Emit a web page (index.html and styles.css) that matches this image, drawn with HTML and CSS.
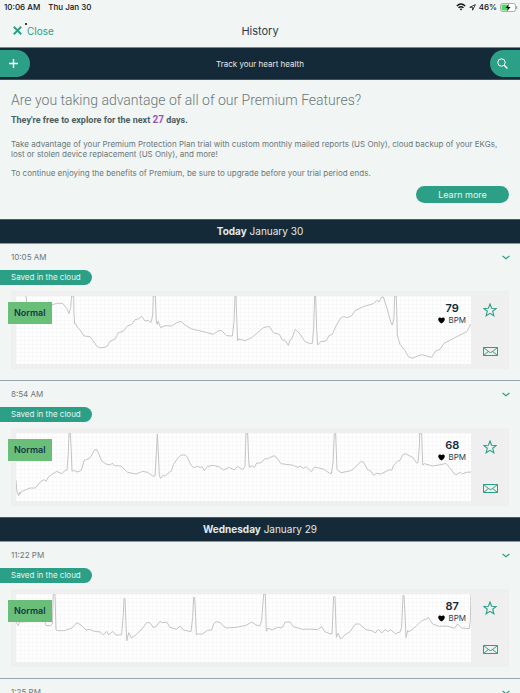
FILE: index.html
```
<!DOCTYPE html>
<html lang="en">
<head>
    <meta charset="UTF-8">
    <meta name="viewport" content="width=device-width, initial-scale=1.0">
    <title>History</title>
    <link rel="stylesheet" href="styles.css">
</head>
<body>

<!-- Shared icons -->
<svg class="sprite" aria-hidden="true">
    <symbol id="chevron" viewBox="0 0 8 5"><path d="M.6 1 L4 3.8 L7.4 1" fill="none" stroke="currentColor" stroke-width="1.2"/></symbol>
    <symbol id="star" viewBox="0 0 14 14"><path d="M7 1 L8.6 5.2 L13.2 5.4 L9.7 8.3 L10.9 12.8 L7 10.3 L3.1 12.8 L4.3 8.3 L.8 5.4 L5.4 5.2 Z" fill="none" stroke="currentColor" stroke-width="1.1"/></symbol>
    <symbol id="mail" viewBox="0 0 15 9"><path d="M.5 .5 H14.5 V8.5 H.5 Z M.5 .5 L5.8 4.8 Q7.5 6.2 9.2 4.8 L14.5 .5 M.5 8.5 L5.4 4.5 M14.5 8.5 L9.6 4.5" fill="none" stroke="currentColor" stroke-width="1"/></symbol>
    <symbol id="heart" viewBox="0 0 7 7"><path d="M3.5 6.6 C2 5.5 .2 4 .2 2.2 C.2 .2 2.7 -.1 3.5 1.2 C4.3 -.1 6.8 .2 6.8 2.2 C6.8 4 5 5.5 3.5 6.6 Z" fill="#000"/></symbol>
</svg>

<div class="app">
    <div class="status-bar">
        <span>10:06 AM</span>
        <span>Thu Jan 30</span>
        <span class="status-right">
            <svg width="10" height="8" viewBox="0 0 10 8" fill="none" stroke="#111" stroke-width="1.4">
                <path d="M.8 2.9 Q5 -.9 9.2 2.9 M2.5 4.8 Q5 2.6 7.5 4.8"/>
                <path d="M3.7 6 Q5 4.9 6.3 6 L5 7.5 Z" fill="#111" stroke="none"/>
            </svg>
            <svg width="7" height="7" viewBox="0 0 7 7"><path d="M6.4 .6 L.8 3.3 H3.6 V6.2 Z" fill="none" stroke="#111" stroke-width=".8"/></svg>
            <span>46%</span>
            <svg class="battery" width="18" height="9" viewBox="0 0 18 9">
                <rect x=".5" y=".5" width="15" height="8" rx="2" fill="#fff" stroke="#999" stroke-width=".8"/>
                <rect x="1.5" y="1.5" width="6.5" height="6" rx="1" fill="#4cd964"/>
                <path d="M8.8 1 L5.6 5 H7.8 L7.2 8 L10.6 4 H8.3 Z" fill="#000"/>
                <path d="M16.7 3 V6" stroke="#999" stroke-width="1"/>
            </svg>
        </span>
    </div>

    <header class="nav">
        <button type="button" class="close">
            <svg width="9" height="9" viewBox="0 0 9 9"><path d="M.8 .8 L8.2 8.2 M8.2 .8 L.8 8.2" stroke="currentColor" stroke-width="2"/></svg>
            <span>Close</span>
        </button>
        <h1>History</h1>
    </header>

    <div class="toolbar">
        <button type="button" class="tool tool-add" aria-label="Add">
            <svg width="9" height="9" viewBox="0 0 9 9"><path d="M4.5 0 V9 M0 4.5 H9" stroke="#fff" stroke-width="1.4"/></svg>
        </button>
        <span>Track your heart health</span>
        <button type="button" class="tool tool-search" aria-label="Search">
            <svg width="11" height="11" viewBox="0 0 11 11" fill="none" stroke="#fff" stroke-width="1"><circle cx="4.5" cy="4.5" r="3.7"/><path d="M7.2 7.2 L10.4 10.4" stroke-width="1.4"/></svg>
        </button>
    </div>

    <main>
        <section class="promo">
            <h2>Are you taking advantage of all of our Premium Features?</h2>
            <p class="trial">They're free to explore for the next <span class="days">27</span> days.</p>
            <p>Take advantage of your Premium Protection Plan trial with custom monthly mailed reports (US Only), cloud backup of your EKGs, lost or stolen device replacement (US Only), and more!</p>
            <p>To continue enjoying the benefits of Premium, be sure to upgrade before your trial period ends.</p>
            <button type="button" class="learn-more">Learn more</button>
        </section>

        <h3 class="day"><b>Today</b> January 30</h3>

        <article class="record">
            <div class="record-head">
                <time>10:05 AM</time>
                <button type="button" class="icon-btn" aria-label="Details"><svg width="8" height="5"><use href="#chevron"/></svg></button>
            </div>
            <span class="cloud">Saved in the cloud</span>
            <div class="panel">
                <span class="result">Normal</span>
                <div class="ecg">
                    <svg class="trace" viewBox="0 0 1365 204" preserveAspectRatio="none">
                        <polyline points="28,0 31,3 32,22 60,40 107,27 122,22 140,22 152,37 159,53 164,35 167,0 173,0 174,50 176,84 180,84 184,93 192,102 204,120 222,122 232,135 242,150 250,155 264,155 274,150 282,136 297,129 307,110 322,106 334,90 347,85 357,71 367,69 377,61 387,75 397,73 405,80 410,57 412,0 418,0 421,82 424,85 426,75 434,95 447,89 467,90 482,80 495,76 507,87 527,99 562,107 592,115 604,106 616,103 632,119 649,120 654,77 657,0 660,0 662,60 665,135 669,129 687,134 707,125 732,104 742,95 760,91 772,110 790,115 799,132 807,133 817,148 822,132 827,129 838,100 852,114 867,137 880,142 889,142 893,97 896,0 899,0 902,100 905,147 914,137 930,135 939,119 949,115 960,90 972,69 982,61 994,65 1007,59 1017,44 1042,32 1072,23 1082,13 1090,17 1097,3 1102,3 1114,40 1124,78 1129,87 1134,67 1136,0 1141,0 1144,117 1152,145 1167,164 1177,182 1190,187 1200,182 1217,176 1247,184 1259,165 1272,160 1284,142 1332,117 1352,107 1365,84"/>
                    </svg>
                    <div class="bpm"><strong>79</strong><span><svg width="7" height="7"><use href="#heart"/></svg>BPM</span></div>
                </div>
                <div class="actions">
                    <button type="button" class="icon-btn" aria-label="Favorite"><svg width="14" height="14"><use href="#star"/></svg></button>
                    <button type="button" class="icon-btn" aria-label="Email"><svg width="15" height="9"><use href="#mail"/></svg></button>
                </div>
            </div>
        </article>

        <article class="record">
            <div class="record-head">
                <time>8:54 AM</time>
                <button type="button" class="icon-btn" aria-label="Details"><svg width="8" height="5"><use href="#chevron"/></svg></button>
            </div>
            <span class="cloud">Saved in the cloud</span>
            <div class="panel">
                <span class="result">Normal</span>
                <div class="ecg">
                    <svg class="trace" viewBox="0 0 1365 204" preserveAspectRatio="none">
                        <polyline points="0,142 3,177 8,188 10,178 12,184 16,176 42,165 58,165 75,145 85,140 90,145 98,131 122,115 138,122 147,112 153,111 157,60 159,0 163,0 166,60 168,115 173,112 184,117 196,112 204,83 222,75 236,50 243,50 257,84 270,93 283,96 289,90 295,98 315,99 335,118 360,123 380,115 395,118 410,129 417,129 421,60 424,3 427,60 430,128 434,136 442,126 447,130 457,120 466,114 472,95 485,76 495,66 508,66 515,74 523,93 532,104 545,100 553,104 558,100 565,113 575,100 592,97 610,102 623,111 640,103 655,111 664,100 680,110 687,100 690,0 695,0 698,80 700,103 708,98 715,104 722,90 732,90 737,88 745,78 755,77 774,68 783,75 795,92 832,97 845,103 853,100 863,106 870,101 886,116 896,102 922,108 940,120 946,122 951,90 955,2 959,2 963,110 975,119 1005,113 1015,105 1035,85 1043,88 1055,110 1065,115 1073,127 1082,121 1095,123 1120,110 1127,112 1133,97 1145,84 1152,82 1160,66 1168,62 1190,73 1202,90 1206,90 1210,40 1211,0 1217,0 1220,96 1225,92 1250,99 1275,95 1290,91 1300,103 1318,126 1333,118 1340,123 1350,118 1365,117"/>
                    </svg>
                    <div class="bpm"><strong>68</strong><span><svg width="7" height="7"><use href="#heart"/></svg>BPM</span></div>
                </div>
                <div class="actions">
                    <button type="button" class="icon-btn" aria-label="Favorite"><svg width="14" height="14"><use href="#star"/></svg></button>
                    <button type="button" class="icon-btn" aria-label="Email"><svg width="15" height="9"><use href="#mail"/></svg></button>
                </div>
            </div>
        </article>

        <h3 class="day"><b>Wednesday</b> January 29</h3>

        <article class="record">
            <div class="record-head">
                <time>11:22 PM</time>
                <button type="button" class="icon-btn" aria-label="Details"><svg width="8" height="5"><use href="#chevron"/></svg></button>
            </div>
            <span class="cloud">Saved in the cloud</span>
            <div class="panel">
                <span class="result">Normal</span>
                <div class="ecg">
                    <svg class="trace" viewBox="0 0 1365 204" preserveAspectRatio="none">
                        <polyline points="0,84 7,95 10,84 50,82 86,80 90,95 104,95 109,90 112,0 117,0 120,108 125,110 145,110 168,102 182,86 195,93 210,108 220,106 235,112 253,114 262,123 272,112 278,123 290,112 300,123 310,123 317,122 322,60 324,14 327,14 330,90 332,141 338,116 346,132 358,124 378,105 392,86 402,86 411,100 420,98 432,82 440,86 452,84 462,100 482,106 492,96 502,108 525,113 530,70 533,10 536,10 539,70 541,122 550,119 556,121 562,118 575,109 587,108 594,88 602,83 612,86 630,102 660,100 690,94 707,84 720,93 732,95 737,80 743,0 748,0 751,112 755,103 770,107 785,100 798,102 808,84 822,84 832,98 860,106 880,105 905,107 917,98 926,113 942,119 948,120 953,8 957,8 961,130 966,118 974,135 990,120 1002,113 1018,90 1030,90 1050,107 1068,110 1078,117 1087,106 1097,117 1108,107 1115,113 1123,107 1138,119 1152,114 1157,100 1161,4 1164,4 1167,60 1170,131 1175,110 1180,113 1200,97 1215,82 1238,71 1250,90 1270,97 1290,96 1300,98 1315,103 1325,90 1336,102 1360,104 1363,80 1365,0"/>
                    </svg>
                    <div class="bpm"><strong>87</strong><span><svg width="7" height="7"><use href="#heart"/></svg>BPM</span></div>
                </div>
                <div class="actions">
                    <button type="button" class="icon-btn" aria-label="Favorite"><svg width="14" height="14"><use href="#star"/></svg></button>
                    <button type="button" class="icon-btn" aria-label="Email"><svg width="15" height="9"><use href="#mail"/></svg></button>
                </div>
            </div>
        </article>

        <article class="record">
            <div class="record-head">
                <time>1:25 PM</time>
                <button type="button" class="icon-btn" aria-label="Details"><svg width="8" height="5"><use href="#chevron"/></svg></button>
            </div>
        </article>
    </main>
</div>

</body>
</html>
```
FILE: styles.css
```
* {
    box-sizing: border-box;
}
body {
    margin: 0;
    font-family: Inter, "Liberation Sans", sans-serif;
    font-size: 8px;
    color: #6b7879;
    background-color: #f1f5f4;
}
h1, h2, h3, p {
    margin: 0;
}
button {
    font-family: inherit;
    border: none;
    padding: 0;
    background: none;
    cursor: pointer;
}
svg {
    display: block;
}
.sprite {
    display: none;
}
.app {
    display: flex;
    flex-direction: column;
    height: 100vh;
}
.status-bar {
    display: flex;
    align-items: center;
    gap: 8px;
    height: 14px;
    padding: 0 2px 0 4px;
    font-size: 8px;
    font-weight: 500;
    color: #111;
}
.status-right {
    display: flex;
    align-items: center;
    gap: 3px;
    margin-left: auto;
}
.nav {
    display: grid;
    grid-template-columns: 1fr auto 1fr;
    align-items: center;
    height: 33px;
    padding: 0 13px;
}
.nav h1 {
    font-size: 11px;
    font-weight: 400;
    line-height: 14px;
    color: #2b3d4c;
}
.close {
    position: relative;
    display: flex;
    align-items: center;
    justify-self: start;
    gap: 5px;
    font-size: 10px;
    line-height: 12px;
    color: #2ca086;
}
/* notification dot */
.close::after {
    content: "";
    position: absolute;
    top: -2px;
    left: 12px;
    width: 2px;
    height: 2px;
    border-radius: 1px;
    background-color: #000;
}
.toolbar {
    display: flex;
    align-items: center;
    justify-content: space-between;
    height: 33px;
    flex-shrink: 0;
    border-top: 1px solid #6f918d;
    border-bottom: 1px solid #40515d;
    background-color: #142a38;
    color: #e3e9ea;
}
.tool {
    display: flex;
    align-items: center;
    width: 30px;
    height: 27px;
    background-color: #2ca086;
}
.tool-add {
    padding-left: 9px;
    border-radius: 0 14px 14px 0;
}
.tool-search {
    padding-left: 7px;
    border-radius: 14px 0 0 14px;
}
main {
    flex: 1;
    min-height: 0;
    overflow-y: auto;
    scrollbar-width: none;
}
.promo {
    display: flex;
    flex-direction: column;
    padding: 11px 11px 16px;
}
.promo h2 {
    font-family: Roboto, Inter, sans-serif;
    font-size: 14px;
    font-weight: 300;
    line-height: 18px;
}
.promo p {
    margin-bottom: 9px;
    line-height: 10px;
}
.promo .trial {
    margin: 4px 0 12px;
    font-family: Roboto, Inter, sans-serif;
    font-size: 9px;
    font-weight: 700;
    line-height: 14px;
    color: #50605f;
}
.promo .days {
    font-size: 10px;
    line-height: 10px;
    color: #9758bb;
}
.learn-more {
    align-self: flex-end;
    width: 93px;
    height: 17px;
    margin-top: -1px;
    border-radius: 9px;
    background-color: #2ca086;
    color: #eaf6f3;
    font-size: 9px;
}
.day {
    height: 25px;
    line-height: 23px;
    border-top: 1px solid #4d5e69;
    border-bottom: 1px solid #8a98a1;
    background-color: #142a38;
    color: #e3e9ea;
    font-size: 10px;
    font-weight: 400;
    text-align: center;
}
.day b {
    font-weight: 700;
}
.record {
    padding-bottom: 11px;
}
.record + .record {
    border-top: 1px solid #9aa5ae;
}
.record-head {
    display: flex;
    align-items: center;
    justify-content: space-between;
    height: 26px;
    padding: 0 10px 0 11px;
}
.icon-btn {
    color: #2ca086;
}
.cloud {
    display: block;
    width: fit-content;
    padding: 0 11px;
    line-height: 15px;
    border-radius: 0 8px 8px 0;
    background-color: #2ca086;
    color: #e6f5f1;
}
.panel {
    position: relative;
    display: flex;
    margin: 6px 11px 0;
    padding: 5px 0 5px 5px;
    background-color: #efefef;
}
.result {
    position: absolute;
    z-index: 1;
    top: 11px;
    left: -3px;
    padding: 0 6px;
    line-height: 22px;
    background-color: #69bf77;
    color: #17384a;
    font-size: 9px;
    font-weight: 600;
}
.ecg {
    position: relative;
    flex: 1;
    height: 68px;
    background-color: #fff;
    background-image:
        linear-gradient(#f8f8f8 1px, transparent 1px),
        linear-gradient(90deg, #f8f8f8 1px, transparent 1px);
    background-size: 4px 4px;
}
.trace {
    width: 100%;
    height: 100%;
}
.trace polyline {
    fill: none;
    stroke: #c4c4c4;
    stroke-width: 1;
    stroke-linejoin: round;
    vector-effect: non-scaling-stroke;
}
.bpm {
    position: absolute;
    top: 6px;
    right: 5px;
    text-align: center;
    color: #2b3d4c;
}
.bpm strong {
    display: block;
    line-height: 12px;
    font-size: 11px;
    font-weight: 600;
    color: #142a38;
}
.bpm span {
    display: flex;
    align-items: center;
    gap: 3px;
    line-height: 12px;
}
.actions {
    display: flex;
    flex-direction: column;
    align-items: center;
    justify-content: space-between;
    width: 38px;
    padding: 7px 0 8px;
}
```
